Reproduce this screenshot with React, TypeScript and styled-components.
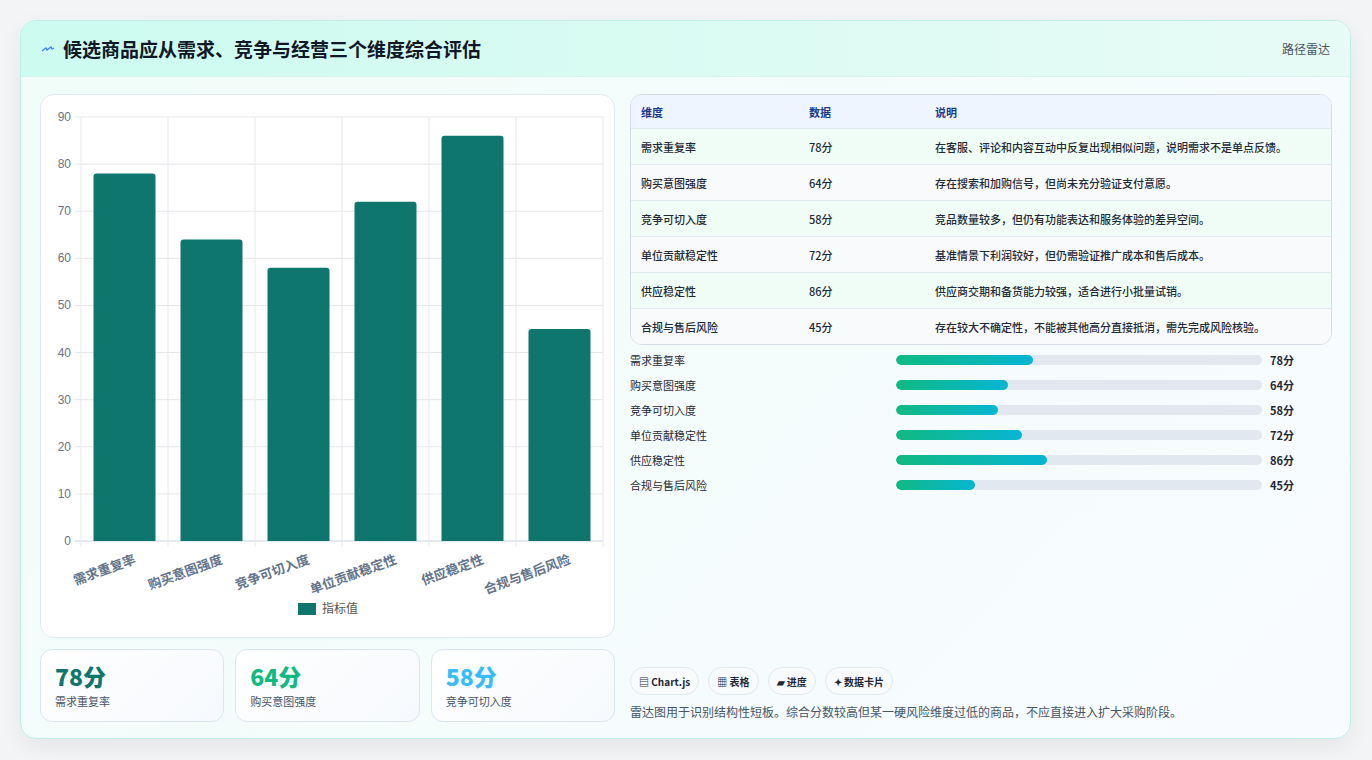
import React from "react";
import styled, { createGlobalStyle } from "styled-components";

const G = createGlobalStyle`
  body{margin:0;background:#f3f4f6;font-family:"Noto Sans CJK SC","Noto Sans",sans-serif;}
`;
const data = [
  { n: "需求重复率", v: 78, d: "在客服、评论和内容互动中反复出现相似问题，说明需求不是单点反馈。" },
  { n: "购买意图强度", v: 64, d: "存在搜索和加购信号，但尚未充分验证支付意愿。" },
  { n: "竞争可切入度", v: 58, d: "竞品数量较多，但仍有功能表达和服务体验的差异空间。" },
  { n: "单位贡献稳定性", v: 72, d: "基准情景下利润较好，但仍需验证推广成本和售后成本。" },
  { n: "供应稳定性", v: 86, d: "供应商交期和备货能力较强，适合进行小批量试销。" },
  { n: "合规与售后风险", v: 45, d: "存在较大不确定性，不能被其他高分直接抵消，需先完成风险核验。" },
];
const Page = styled.div`padding:20px 21px 20px 20px;`;
const Card = styled.div`height:719px;box-sizing:border-box;border:1px solid #bfeee6;border-radius:16px;background:linear-gradient(135deg,#f0fdf8,#f8fbff);box-shadow:0 8px 24px rgba(0,0,0,.06);overflow:hidden;display:flex;flex-direction:column;`;
const Header = styled.div`height:55px;flex:none;display:flex;align-items:center;justify-content:space-between;padding:0 20px;background:linear-gradient(90deg,#ccfbef,#e8fbf6);border-bottom:1px solid #d6f3ec;`;
const Title = styled.h1`margin:0;font-size:19px;font-weight:700;color:#111827;display:flex;align-items:center;gap:8px;`;
const Tag = styled.span`font-size:12px;color:#4b5563;`;
const Body = styled.div`flex:1;display:grid;grid-template-columns:575px 1fr;gap:15px;padding:17px 18px 18px 19px;`;
const Col = styled.div`display:flex;flex-direction:column;gap:11px;min-height:0;`;
const ChartBox = styled.div`height:544px;box-sizing:border-box;background:#fff;border:1px solid #e2e8f0;border-radius:14px;`;
const Stats = styled.div`display:grid;grid-template-columns:repeat(3,1fr);gap:11px;`;
const Stat = styled.div`height:73px;box-sizing:border-box;border:1px solid #dbe5f0;border-radius:12px;background:linear-gradient(135deg,#fff,#f6f9fd);padding:11px 14px;`;
const Big = styled.div<{ c: string }>`font-size:23px;font-weight:800;color:${p => p.c};line-height:30px;`;
const Small = styled.div`font-size:11px;color:#475569;margin-top:2px;`;
const Table = styled.div`border:1px solid #d5dde8;border-radius:12px;overflow:hidden;background:#fff;`;
const Row = styled.div<{ h?: boolean; alt?: boolean }>`display:grid;grid-template-columns:168px 126px 1fr;height:${p => p.h ? 33 : 35}px;align-items:center;padding-left:10px;font-size:11px;
  color:${p => p.h ? "#1e3a8a" : "#1f2937"};font-weight:${p => p.h ? 600 : 500};
  background:${p => p.h ? "#eef5ff" : p.alt ? "#f8fafc" : "#f0fdf6"};border-top:${p => p.h ? "none" : "1px solid #e2e8f0"};`;
const Bars = styled.div`display:flex;flex-direction:column;gap:7px;margin-top:6px;`;
const BarRow = styled.div`display:grid;grid-template-columns:266px 366px 1fr;align-items:center;height:18px;font-size:11px;color:#1f2937;`;
const Track = styled.div`height:10px;border-radius:5px;background:#e2e8f0;overflow:hidden;`;
const Fill = styled.div`height:100%;border-radius:5px;background:linear-gradient(90deg,#10b981,#06b6d4);`;
const Val = styled.span`font-weight:700;padding-left:8px;`;
const Spacer = styled.div`flex:1;`;
const Chips = styled.div`display:flex;gap:9px;`;
const Chip = styled.span`height:28px;box-sizing:border-box;padding:0 8px;border:1px solid #e2e8f0;border-radius:14px;background:#f8fafc;font-size:10px;font-weight:600;color:#1f2937;display:flex;align-items:center;gap:3px;`;
const Note = styled.p`margin:8px 0 2px;font-size:12px;color:#475569;`;

function Chart() {
  const x0 = 40, y0 = 446, h = 424, w = 522, bw = 87;
  const cats = data;
  return (
    <svg width="573" height="542" style={{ display: "block" }}>
      {Array.from({ length: 10 }, (_, i) => {
        const y = y0 - (i * h) / 9;
        return <g key={i}>
          <line x1={x0 - 6} x2={x0 + w} y1={y} y2={y} stroke={i === 0 ? "#cbd5e1" : "#e5e7eb"} />
          <text x={x0 - 10} y={y + 4} fontSize="12" textAnchor="end" fill="#6b7280" fontFamily="Liberation Sans">{i * 10}</text>
        </g>;
      })}
      {Array.from({ length: 7 }, (_, i) => <line key={i} x1={x0 + i * bw} x2={x0 + i * bw} y1={y0 - h} y2={y0 + 6} stroke="#e5e7eb" />)}
      {cats.map((c, i) => {
        const bh = (c.v / 90) * h;
        const cx = x0 + i * bw + bw / 2;
        return <g key={i}>
          <path d={`M${cx - 31} ${y0}V${y0 - bh + 3}q0-3 3-3h56q3 0 3 3V${y0}Z`} fill="#0f766e" />
          <text transform={`translate(${cx + 12},${y0 + 22}) rotate(-20)`} fontSize="13" fontWeight="600" textAnchor="end" fill="#64748b">{c.n}</text>
        </g>;
      })}
      <rect x="257" y="508" width="18" height="12" fill="#0f766e" />
      <text x="281" y="518" fontSize="12" fill="#555">指标值</text>
    </svg>
  );
}

export default function App() {
  const colors = ["#0f766e", "#10b981", "#38bdf8"];
  return (
    <Page>
      <G />
      <Card>
        <Header>
          <Title><svg width="14" height="10" viewBox="0 0 14 10"><path d="M1 7l4-3 1 2 4-3 1 2 2-1" stroke="#3b82f6" fill="none" strokeWidth="1.2" /></svg>候选商品应从需求、竞争与经营三个维度综合评估</Title>
          <Tag>路径雷达</Tag>
        </Header>
        <Body>
          <Col>
            <ChartBox><Chart /></ChartBox>
            <Stats>
              {data.slice(0, 3).map((d, i) => <Stat key={i}><Big c={colors[i]}>{d.v}分</Big><Small>{d.n}</Small></Stat>)}
            </Stats>
          </Col>
          <Col style={{ gap: 0 }}>
            <Table>
              <Row h><span>维度</span><span>数据</span><span>说明</span></Row>
              {data.map((d, i) => <Row key={i} alt={i % 2 === 1}><span>{d.n}</span><span>{d.v}分</span><span>{d.d}</span></Row>)}
            </Table>
            <Bars>
              {data.map((d, i) => <BarRow key={i}><span>{d.n}</span><Track><Fill style={{ width: `${d.v * 0.48}%` }} /></Track><Val>{d.v}分</Val></BarRow>)}
            </Bars>
            <Spacer />
            <Chips>
              <Chip>▤ Chart.js</Chip><Chip>▦ 表格</Chip><Chip>▰ 进度</Chip><Chip>✦ 数据卡片</Chip>
            </Chips>
            <Note>雷达图用于识别结构性短板。综合分数较高但某一硬风险维度过低的商品，不应直接进入扩大采购阶段。</Note>
          </Col>
        </Body>
      </Card>
    </Page>
  );
}
